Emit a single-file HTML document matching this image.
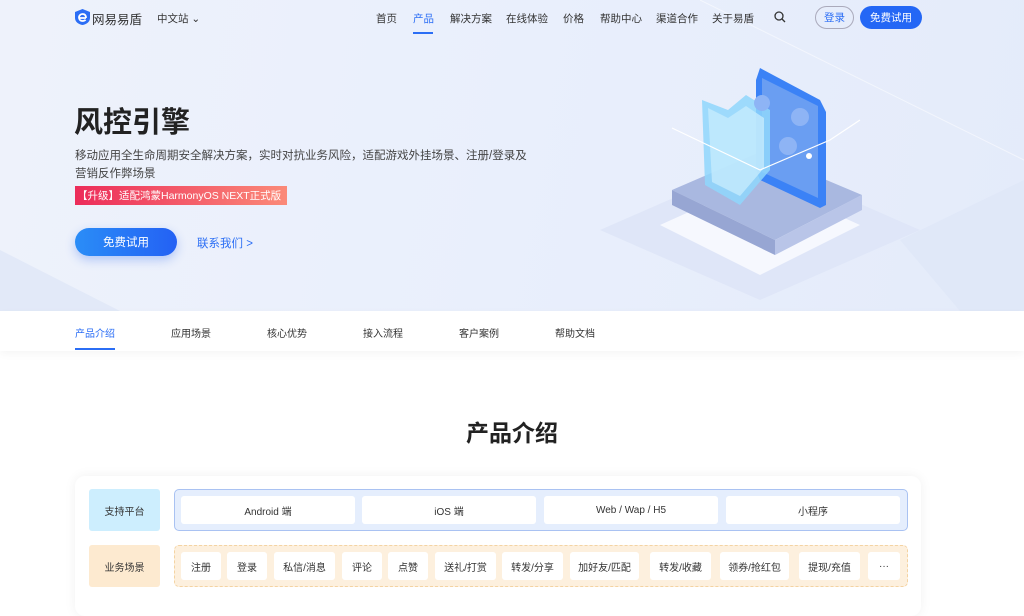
<!DOCTYPE html>
<html><head><meta charset="utf-8"><style>
*{margin:0;padding:0;box-sizing:border-box}
body{width:1024px;height:601px;overflow:hidden;font-family:"Liberation Sans","Noto Sans CJK SC",sans-serif;background:#fff;color:#333;position:relative}
.hero{position:absolute;left:0;top:0;width:1024px;height:311px;background:linear-gradient(100deg,#eef2fb 0%,#e9effc 50%,#e4ebfa 100%);overflow:hidden}
.nav a{position:absolute;top:11px;font-size:10.5px;color:#333;text-decoration:none}
.abs{position:absolute}
.c{display:flex;align-items:center;justify-content:center}
.tabs{position:absolute;left:0;top:311px;width:1024px;height:40px;background:#fff;box-shadow:0 3px 8px rgba(0,0,0,.04)}
.tabs span{position:absolute;top:14px;font-size:10px;color:#333}
.card{position:absolute;left:75px;top:476px;width:846px;height:140px;background:#fff;border-radius:10px;box-shadow:0 0 12px rgba(0,0,0,.06)}
.lab{position:absolute;width:71px;height:42px;border-radius:3px;font-size:10px;display:flex;align-items:center;justify-content:center;color:#333}
.it{position:absolute;background:#fff;border-radius:3px;font-size:10px;display:flex;align-items:center;justify-content:center;color:#333;height:28px}
</style></head><body>
<div class="hero">
<svg class="abs" style="left:0;top:0" width="1024" height="311">
<polygon points="0,250 120,311 0,311" fill="#e2e9f8"/>
<polygon points="900,240 1024,180 1024,311 960,311" fill="#e0e8f8"/>
<polyline points="700,0 1024,160" stroke="#fff" stroke-width="1" fill="none" opacity=".5"/>
<polygon points="600,230 760,160 920,230 760,300" fill="#dfe6f8"/>
<polygon points="660,225 760,180 860,225 760,275" fill="#f6f8fe"/>
<polygon points="672,190 760,152 862,195 775,240" fill="#a9b8e0"/>
<polygon points="672,190 672,205 775,255 775,240" fill="#97a6d3"/>
<polygon points="775,240 862,195 862,210 775,255" fill="#b9c5e8"/>
<polygon points="756,80 760,68 820,100 826,112 826,205 820,208 760,180 756,170" fill="#3b82f6"/>
<polygon points="762,78 818,106 818,198 762,172" fill="#6a9ef2"/>
<polygon points="702,100 728,110 746,95 770,110 770,170 740,205 705,185" fill="#8fd6fb" opacity=".85"/>
<polygon points="708,108 728,118 746,106 764,118 764,168 740,196 712,182" fill="#c5ebfc" opacity=".8"/>
<circle cx="762" cy="103" r="8" fill="#8eb4f5"/><circle cx="800" cy="117" r="9" fill="#8eb4f5"/><circle cx="788" cy="146" r="9" fill="#8eb4f5"/>
<polyline points="672,128 760,170 830,140 860,120" stroke="#fff" fill="none" stroke-width="1.2"/>
<circle cx="809" cy="156" r="3" fill="#fff"/>
</svg>
<svg class="abs" style="left:75px;top:9px" width="15" height="16" viewBox="0 0 15 16"><path d="M7.5 0L15 3V9C15 13 11 15.5 7.5 16C4 15.5 0 13 0 9V3Z" fill="#2b6ef5"/><path d="M11 9H4.5M11 9C11 6 9.5 5 7.5 5S4 6.5 4 8.5 5.5 12 7.5 12c1.5 0 2.5-.5 3-1.3" stroke="#fff" stroke-width="1.8" fill="none"/></svg>
<div class="abs" style="left:92px;top:9px;font-size:12.5px;color:#333">网易易盾</div>
<div class="abs" style="left:157px;top:11px;font-size:10.5px;color:#333">中文站 ⌄</div>
<div class="nav">
<a style="left:376px">首页</a><a style="left:413px;color:#2b6ef5">产品</a><a style="left:450px">解决方案</a><a style="left:506px">在线体验</a><a style="left:563px">价格</a><a style="left:600px">帮助中心</a><a style="left:656px">渠道合作</a><a style="left:712px">关于易盾</a>
</div>
<div class="abs" style="left:413px;top:32px;width:20px;height:2px;background:#2b6ef5"></div>
<svg class="abs" style="left:774px;top:11px" width="12" height="12"><circle cx="5" cy="5" r="4" stroke="#333" stroke-width="1.3" fill="none"/><line x1="8" y1="8" x2="11" y2="11" stroke="#333" stroke-width="1.3"/></svg>
<div class="abs c" style="left:815px;top:6px;width:39px;height:23px;border:1px solid #aab;border-radius:12px;font-size:10.5px;color:#2b6ef5">登录</div>
<div class="abs c" style="left:860px;top:6px;width:62px;height:23px;background:#2467f5;border-radius:12px;font-size:10.5px;color:#fff">免费试用</div>
<div class="abs" style="left:74px;top:99px;font-size:29px;font-weight:bold;color:#222">风控引擎</div>
<div class="abs" style="left:75px;top:147px;width:460px;font-size:11.5px;line-height:18px;color:#444">移动应用全生命周期安全解决方案，实时对抗业务风险，适配游戏外挂场景、注册/登录及营销反作弊场景</div>
<div class="abs" style="left:75px;top:186px;width:212px;height:19px;background:linear-gradient(90deg,#ec2c5a,#fb8a78);color:#fff;font-size:10.5px;display:flex;align-items:center;padding-left:2px">【升级】适配鸿蒙HarmonyOS NEXT正式版</div>
<div class="abs c" style="left:75px;top:228px;width:102px;height:28px;border-radius:14px;background:linear-gradient(90deg,#2a8df7,#2461f4);color:#fff;font-size:11.5px;box-shadow:0 4px 10px rgba(40,100,240,.3)">免费试用</div>
<div class="abs" style="left:197px;top:235px;font-size:11.5px;color:#2b6ef5">联系我们 &gt;</div>
</div>
<div class="tabs">
<span style="left:75px;color:#2b6ef5">产品介绍</span><span style="left:171px">应用场景</span><span style="left:267px">核心优势</span><span style="left:363px">接入流程</span><span style="left:459px">客户案例</span><span style="left:555px">帮助文档</span>
<div class="abs" style="left:75px;top:37px;width:40px;height:2px;background:#2b6ef5"></div>
</div>
<div class="abs" style="left:0;top:414px;width:1024px;text-align:center;font-size:23px;font-weight:bold;color:#222">产品介绍</div>
<div class="card">
<div class="lab" style="left:14px;top:13px;background:#cdeefe">支持平台</div>
<div class="abs" style="left:99px;top:13px;width:734px;height:42px;background:#e5eefd;border:1px solid #a9c2f2;border-radius:5px"></div>
<div class="it" style="left:106px;top:20px;width:174px">Android 端</div>
<div class="it" style="left:287px;top:20px;width:174px">iOS 端</div>
<div class="it" style="left:469px;top:20px;width:174px">Web / Wap / H5</div>
<div class="it" style="left:651px;top:20px;width:174px">小程序</div>
<div class="lab" style="left:14px;top:69px;background:#fdead0">业务场景</div>
<div class="abs" style="left:99px;top:69px;width:734px;height:42px;background:#fdf0de;border:1px dashed #f4d3a2;border-radius:5px"></div>
<div class="it" style="left:106px;top:76px;width:40px">注册</div>
<div class="it" style="left:152px;top:76px;width:40px">登录</div>
<div class="it" style="left:199px;top:76px;width:61px">私信/消息</div>
<div class="it" style="left:267px;top:76px;width:40px">评论</div>
<div class="it" style="left:313px;top:76px;width:40px">点赞</div>
<div class="it" style="left:360px;top:76px;width:61px">送礼/打赏</div>
<div class="it" style="left:427px;top:76px;width:61px">转发/分享</div>
<div class="it" style="left:495px;top:76px;width:69px">加好友/匹配</div>
<div class="it" style="left:575px;top:76px;width:61px">转发/收藏</div>
<div class="it" style="left:645px;top:76px;width:69px">领券/抢红包</div>
<div class="it" style="left:724px;top:76px;width:61px">提现/充值</div>
<div class="it" style="left:793px;top:76px;width:32px">···</div>
</div>
</body></html>
